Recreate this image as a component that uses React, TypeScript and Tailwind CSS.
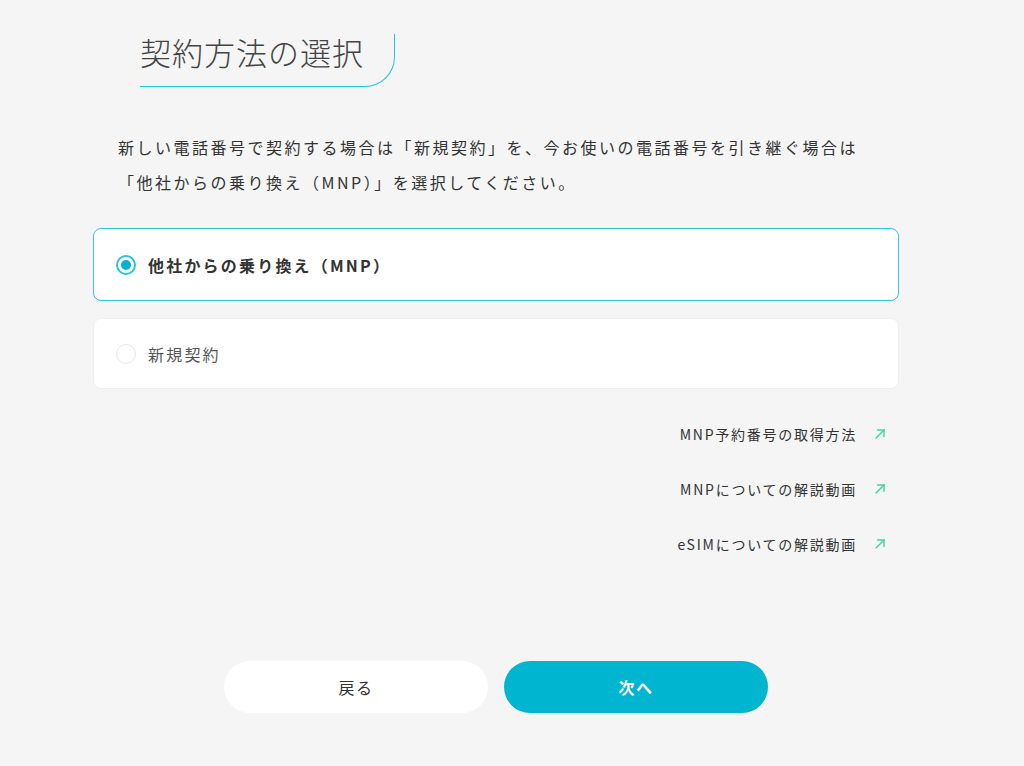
import React, { useState } from "react";

const font = { fontFamily: '"Noto Sans CJK JP", "Noto Sans", sans-serif' };

function Radio({ checked }: { checked: boolean }) {
  return checked ? (
    <span className="flex h-[20px] w-[20px] items-center justify-center rounded-full border-2 border-[#2ec2d9] bg-white">
      <span className="h-[10px] w-[10px] rounded-full bg-[#00b4d0]" />
    </span>
  ) : (
    <span className="h-[20px] w-[20px] rounded-full border border-[#e6e6e6] bg-white" />
  );
}

function ExternalArrow() {
  return (
    <svg width="12" height="12" viewBox="0 0 12 12" fill="none" stroke="#3fd79b" strokeWidth="1.4" strokeLinecap="round">
      <path d="M2 10L10 2" />
      <path d="M3.5 2H10V8.5" />
    </svg>
  );
}

export default function App() {
  const [plan, setPlan] = useState<"mnp" | "new">("mnp");

  const options = [
    { id: "mnp" as const, label: "他社からの乗り換え（MNP）" },
    { id: "new" as const, label: "新規契約" },
  ];

  const links = ["MNP予約番号の取得方法", "MNPについての解説動画", "eSIMについての解説動画"];

  return (
    <div className="min-h-[766px] w-full bg-[#f5f5f5] text-[#333]" style={font}>
      <div className="ml-[93px] w-[806px] pb-[53px] pt-[34px]">
        <div className="ml-[47px] h-[53px] w-[255px] rounded-br-[30px] border-b border-r border-[#26c4db]">
          <h1 className="text-[31px] font-extralight leading-[36px] tracking-[1px] text-[#444]">契約方法の選択</h1>
        </div>

        <p className="ml-[25px] mt-[43px] text-[16px] leading-[35px] tracking-[2.5px] text-[#333]">
          新しい電話番号で契約する場合は「新規契約」を、今お使いの電話番号を引き継ぐ場合は
          <br />
          「他社からの乗り換え（MNP）」を選択してください。
        </p>

        <div className="mt-[28px] flex flex-col gap-[17px]">
          {options.map((o) => {
            const checked = plan === o.id;
            return (
              <button
                key={o.id}
                onClick={() => setPlan(o.id)}
                className={
                  checked
                    ? "flex h-[73px] items-center gap-[12px] rounded-[8px] border border-[#35c6dc] bg-white pl-[22px] text-left"
                    : "flex h-[71px] items-center gap-[12px] rounded-[8px] border border-[#f0f0f0] bg-white pl-[22px] text-left"
                }
              >
                <Radio checked={checked} />
                <span
                  className={
                    checked
                      ? "text-[16px] font-bold tracking-[2.2px] text-[#333]"
                      : "text-[16px] tracking-[2.2px] text-[#555]"
                  }
                >
                  {o.label}
                </span>
              </button>
            );
          })}
        </div>

        <div className="mr-[13px] mt-[34px] flex flex-col items-end gap-[33px]">
          {links.map((l) => (
            <a key={l} href="#" className="flex h-[22px] items-center gap-[17px] text-[14px] tracking-[1.75px] text-[#333]">
              <span>{l}</span>
              <ExternalArrow />
            </a>
          ))}
        </div>

        <div className="mt-[106px] flex justify-center gap-[16px]">
          <button className="h-[52px] w-[264px] rounded-full bg-white text-[16px] tracking-[1.5px] text-[#333]">戻る</button>
          <button className="h-[52px] w-[264px] rounded-full bg-[#00b5d0] text-[16px] font-bold tracking-[1.5px] text-white">次へ</button>
        </div>
      </div>
    </div>
  );
}
